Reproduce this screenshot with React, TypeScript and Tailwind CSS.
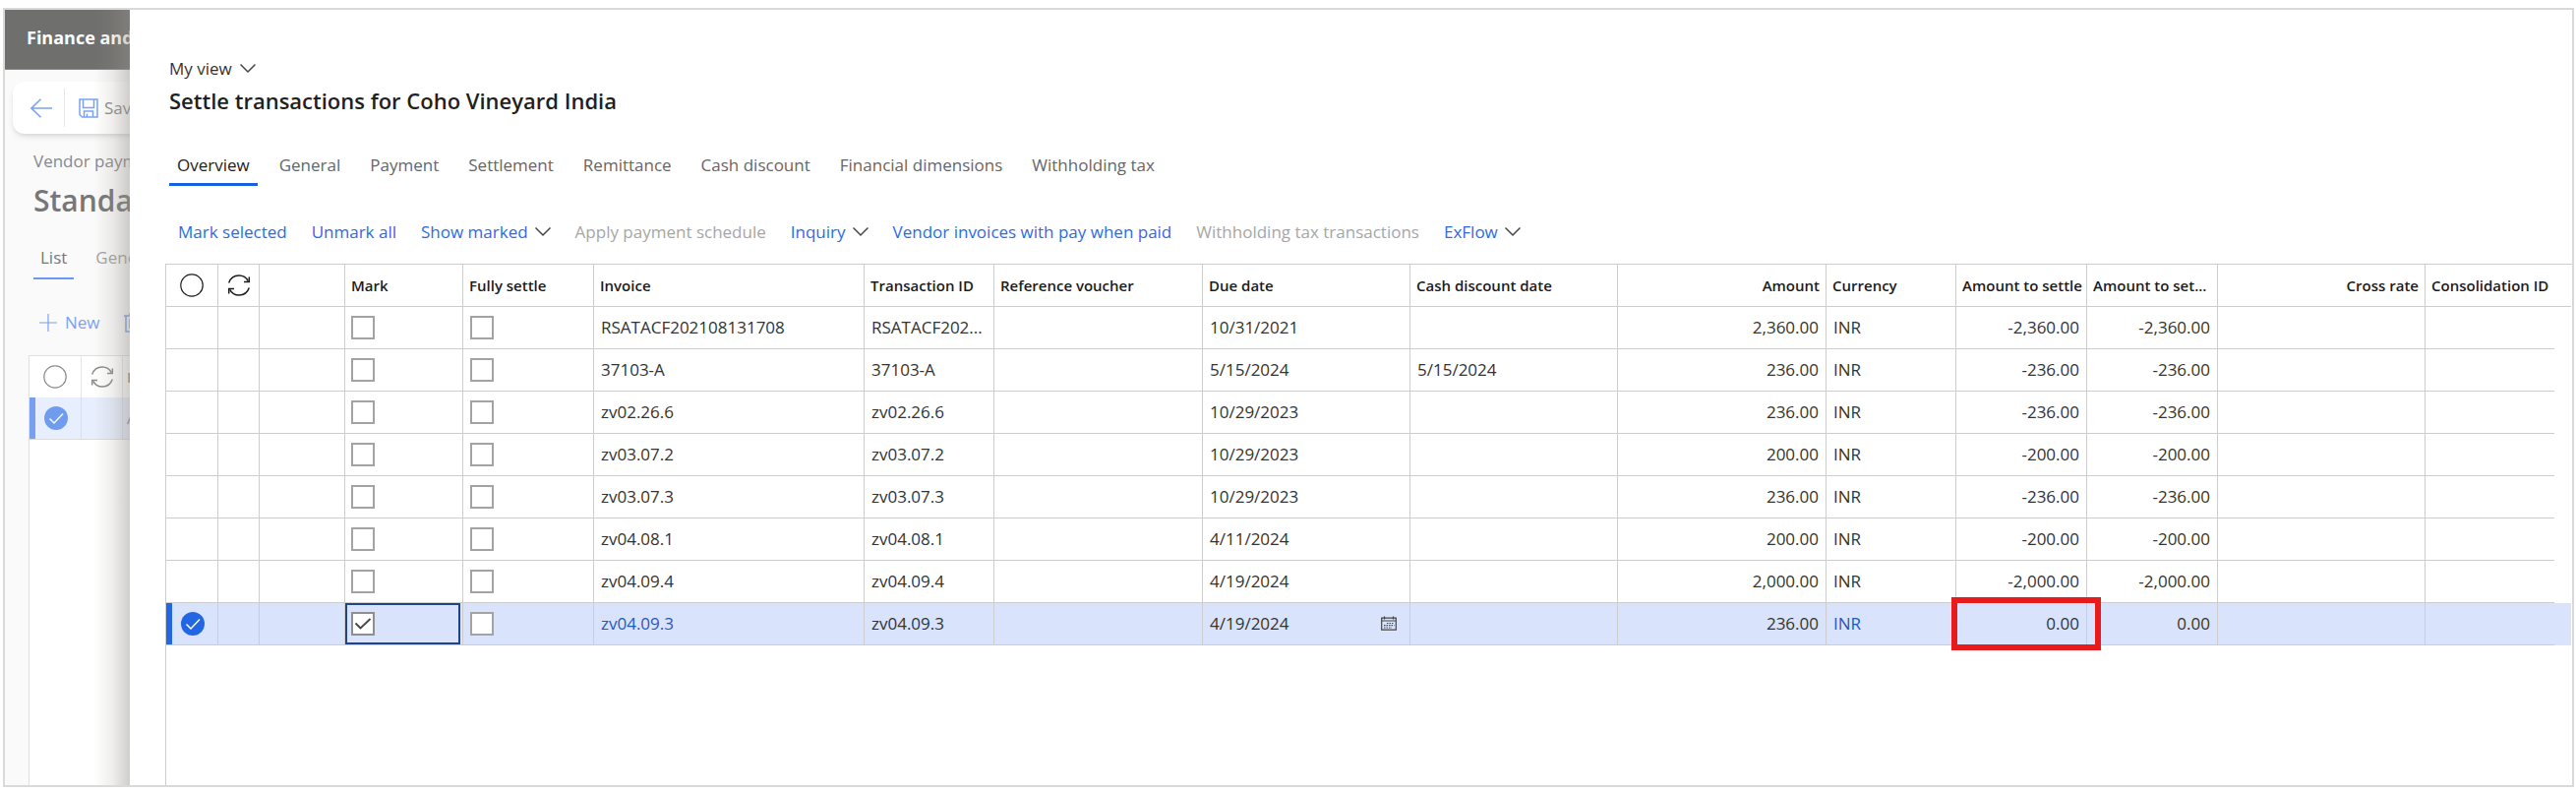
import React from 'react';

const tabs = [
    'Overview',
    'General',
    'Payment',
    'Settlement',
    'Remittance',
    'Cash discount',
    'Financial dimensions',
    'Withholding tax',
];

const actions = [
    { name: 'Mark selected' },
    { name: 'Unmark all' },
    { name: 'Show marked', menu: true },
    { name: 'Apply payment schedule', disabled: true },
    { name: 'Inquiry', menu: true },
    { name: 'Vendor invoices with pay when paid' },
    { name: 'Withholding tax transactions', disabled: true },
    { name: 'ExFlow', menu: true },
];

type Transaction = {
    invoice: string;
    id: string;
    due: string;
    discount?: string;
    amount: string;
    settle: string;
    selected?: boolean;
};

const transactions: Transaction[] = [
    { invoice: 'RSATACF202108131708', id: 'RSATACF202...', due: '10/31/2021', amount: '2,360.00', settle: '-2,360.00' },
    { invoice: '37103-A', id: '37103-A', due: '5/15/2024', discount: '5/15/2024', amount: '236.00', settle: '-236.00' },
    { invoice: 'zv02.26.6', id: 'zv02.26.6', due: '10/29/2023', amount: '236.00', settle: '-236.00' },
    { invoice: 'zv03.07.2', id: 'zv03.07.2', due: '10/29/2023', amount: '200.00', settle: '-200.00' },
    { invoice: 'zv03.07.3', id: 'zv03.07.3', due: '10/29/2023', amount: '236.00', settle: '-236.00' },
    { invoice: 'zv04.08.1', id: 'zv04.08.1', due: '4/11/2024', amount: '200.00', settle: '-200.00' },
    { invoice: 'zv04.09.4', id: 'zv04.09.4', due: '4/19/2024', amount: '2,000.00', settle: '-2,000.00' },
    { invoice: 'zv04.09.3', id: 'zv04.09.3', due: '4/19/2024', amount: '236.00', settle: '0.00', selected: true },
];

const ChevronIcon: React.FC = () => (
    <svg className="w-4 h-4 text-[#444]" viewBox="0 0 16 16" fill="none" stroke="currentColor" strokeWidth="1.5">
        <path d="M0.5 3.5 8 11l7.5-7.5" />
    </svg>
);

const RefreshIcon: React.FC = () => (
    <svg className="w-6 h-6 mx-auto" viewBox="0 0 24 24" fill="none" stroke="currentColor" strokeWidth="1.5">
        <path d="M1.7 9.5C3.2 5 7.2 2 12 2c4 0 7.5 2.2 9.3 5.7M22.3 14.5C20.8 19 16.8 22 12 22c-4 0-7.5-2.2-9.3-5.7" />
        <path d="M22.3 3.5v5h-5.3M1.7 20.5v-5H7" />
    </svg>
);

const CircleIcon: React.FC = () => (
    <svg className="w-6 h-6 mx-auto" viewBox="0 0 24 24" fill="none" stroke="currentColor" strokeWidth="1.2">
        <circle cx="12" cy="12" r="11.2" />
    </svg>
);

const CheckedCircleIcon: React.FC = () => (
    <svg className="w-6 h-6 mx-auto" viewBox="0 0 24 24" fill="none">
        <circle cx="12" cy="12" r="12" fill="#2266e3" />
        <path d="M5.5 12.5l4.5 4.5 9-9.5" stroke="#fff" strokeWidth="1.5" />
    </svg>
);

const CalendarIcon: React.FC = () => (
    <svg className="w-4 h-4" viewBox="0 0 16 16" fill="none" stroke="#444" strokeWidth="1.2">
        <path d="M0.7 2.2h14.6v12H0.7zM0.7 5h14.6M3.5 0.5v3M12.5 0.5v3" />
        <path d="M6 7.5h7.5M3 9.7h10.5M3 12h8" strokeDasharray="1.5 1" />
    </svg>
);

const BackgroundPage: React.FC = () => (
    <aside className="relative w-[127px] shrink-0 overflow-hidden flex flex-col whitespace-nowrap bg-[#fafafa]">
        <header className="h-[61px] shrink-0 flex items-center pl-[22px] pb-1 bg-[#6f6f6d] border-b border-[#8a8a88] text-white text-lg font-bold">
            Finance and Operations
        </header>
        <div className="mt-3 ml-2 h-[53px] w-60 shrink-0 flex items-center rounded-xl bg-white shadow-md text-[#8a8a8a]">
            <button aria-label="Back" className="w-[53px] h-[39px] flex items-center justify-end pr-3 border-r border-[#e6e6e6]">
                <svg className="w-[22px] h-5" viewBox="0 0 22 20" fill="none" stroke="#7ba2f0" strokeWidth="1.6">
                    <path d="M22 10H1M10.5 0.8 1 10l9.5 9.2" />
                </svg>
            </button>
            <button className="flex items-center gap-[6px] pl-[14px] text-[17px]">
                <svg className="w-5 h-5" viewBox="0 0 20 20" fill="none" stroke="#7ba2f0" strokeWidth="1.5">
                    <path d="M1 1h18v18H3.5L1 16.5zM4.5 1v8.5h11V1M5.5 19v-6h9v6M8.5 19v-3.5" />
                </svg>
                Save
            </button>
        </div>
        <div className="mt-4 pl-[29px] flex flex-col">
            <span className="text-[17px] leading-6 text-[#8a8886]">Vendor payments</span>
            <span className="mt-2 text-3xl font-semibold leading-10 text-[#777]">Standard view</span>
            <div className="mt-[26px] flex gap-[22px] text-[17px] leading-6">
                <a href="#" className="px-[7px] pb-2 border-b-2 border-[#6b98f3] text-[#777]">List</a>
                <a href="#" className="text-[#a3a3a3]">General</a>
            </div>
            <div className="mt-7 pl-[6px] flex gap-6 text-[17px] leading-8 text-[#7ba2f0]">
                <button className="flex items-center gap-2">
                    <svg className="w-[18px] h-[18px]" viewBox="0 0 18 18" stroke="currentColor" strokeWidth="1.2">
                        <path d="M9 0v18M0 9h18" />
                    </svg>
                    New
                </button>
                <button aria-label="Delete">
                    <svg className="w-[18px] h-5" viewBox="0 0 18 20" fill="none" stroke="currentColor" strokeWidth="1.5">
                        <path d="M0 3h18M2 3v16h14V3M6 3V1h6v2M6 6v10M9 6v10M12 6v10" />
                    </svg>
                </button>
            </div>
        </div>
        <div className="mt-[17px] ml-6 flex-1 bg-white border-l border-t border-[#e0e0e0] text-[#8a8a8a]">
            <div className="h-[42px] w-60 flex items-center">
                <span className="w-[53px] h-full flex items-center border-r border-[#e6e6e6]"><CircleIcon /></span>
                <span className="w-[42px] h-full flex items-center border-r border-[#e6e6e6]"><RefreshIcon /></span>
                <span className="pl-1 text-[15px] font-semibold">Name</span>
            </div>
            <div className="h-[43px] w-60 flex items-center bg-[#e7eefd] border-b border-[#dcdcdc]">
                <span className="w-[53px] h-full flex items-center pr-[5px] border-l-6 border-r border-r-[#d8deea] border-l-[#78a0ee]">
                    <span className="mx-auto opacity-60"><CheckedCircleIcon /></span>
                </span>
                <span className="w-[42px] h-full border-r border-[#d8deea]" />
                <span className="pl-1 text-[17px]">APPay</span>
            </div>
        </div>
        {/* shade cast by the slide-over panel */}
        <div className="absolute inset-y-0 right-0 w-9 bg-linear-to-r from-transparent via-[#96918a]/15 to-[#96918a]/45" />
    </aside>
);

type HeadProps = {
    children?: React.ReactNode;
    right?: boolean;
};

const Head: React.FC<HeadProps> = ({ children, right }) => (
    <th className={`h-[43px] px-[6px] border-l border-b border-[#cdcdcd] font-semibold whitespace-nowrap ${right ? 'text-right' : 'text-left'}`}>
        {children}
    </th>
);

const Cell: React.FC<HeadProps & { className?: string }> = ({ children, right, className = '' }) => (
    <td className={`h-[43px] px-[7px] border-l border-b border-[#cdcdcd] whitespace-nowrap ${right ? 'text-right' : 'text-left'} ${className}`}>
        {children}
    </td>
);

const CheckBox: React.FC<{ label: string; checked?: boolean }> = ({ label, checked }) => (
    <span className="relative block w-6 h-6">
        <input
            type="checkbox"
            aria-label={label}
            defaultChecked={checked}
            className="peer block w-6 h-6 appearance-none bg-white border-2 border-[#a3a3a3] checked:border-[#8f8f8f]"
        />
        <svg
            className="hidden peer-checked:block absolute inset-0 w-6 h-6 pointer-events-none"
            viewBox="0 0 24 24"
            fill="none"
            stroke="#444"
            strokeWidth="1.8"
        >
            <path d="M4.5 11.5l5 5 10-9.5" />
        </svg>
    </span>
);

const TransactionRow: React.FC<{ row: Transaction }> = ({ row }) => (
    <tr className={row.selected ? 'bg-[#d9e4fc]' : ''}>
        <td className="h-[43px] border-l border-b border-[#cdcdcd]">
            {row.selected && (
                <div className="h-[42px] flex items-center border-l-6 pr-[5px] border-[#2266e3]">
                    <CheckedCircleIcon />
                </div>
            )}
        </td>
        <Cell />
        <Cell />
        <td className="h-[43px] border-l border-b border-[#cdcdcd]">
            <div className={`h-[42px] mr-[2px] flex items-center ${row.selected ? 'border-2 border-[#1f448c] pl-1' : 'pl-[6px]'}`}>
                <CheckBox label={`Mark ${row.invoice}`} checked={row.selected} />
            </div>
        </td>
        <Cell>
            <CheckBox label={`Fully settle ${row.invoice}`} />
        </Cell>
        <Cell>
            {row.selected ? <a href="#" className="text-[#2459bd]">{row.invoice}</a> : row.invoice}
        </Cell>
        <Cell>{row.id}</Cell>
        <Cell />
        <Cell>
            <div className="flex items-center justify-between pr-[6px]">
                {row.due}
                {row.selected && <button aria-label="Pick due date"><CalendarIcon /></button>}
            </div>
        </Cell>
        <Cell>{row.discount}</Cell>
        <Cell right>{row.amount}</Cell>
        <Cell>
            {row.selected ? <a href="#" className="text-[#2459bd]">INR</a> : 'INR'}
        </Cell>
        <Cell right className="relative">
            {row.settle}
            {row.selected && <span className="absolute -left-[5px] -right-[15px] -top-[6px] -bottom-[6px] z-10 border-6 border-[#e81a1c]" />}
        </Cell>
        <Cell right>{row.settle}</Cell>
        <Cell />
        <Cell />
        <td />
    </tr>
);

const SettlePanel: React.FC = () => (
    <main className="flex-1 min-w-0 flex flex-col pl-9 bg-white">
        <button className="mt-11 ml-1 self-start flex items-center gap-2 text-[17px] leading-8 text-[#333]">
            My view
            <ChevronIcon />
        </button>
        <h1 className="ml-1 text-[22px] leading-8 font-semibold text-[#1f1f1f]">
            Settle transactions for Coho Vineyard India
        </h1>
        <nav className="mt-[38px] ml-1 flex gap-[14px] text-[17px] leading-6">
            {tabs.map((tab, i) => (
                <a
                    key={tab}
                    href="#"
                    className={`px-2 pb-[6px] border-b-3 ${i === 0 ? 'border-[#1a5fe0] text-[#222]' : 'border-transparent text-[#666]'}`}
                >
                    {tab}
                </a>
            ))}
        </nav>
        <div className="mt-[31px] ml-[13px] flex gap-[25px] text-[17px] leading-8">
            {actions.map((action) => (
                <button
                    key={action.name}
                    disabled={action.disabled}
                    className="flex items-center gap-[7px] text-[#2c6be6] disabled:text-[#a6a6a6]"
                >
                    {action.name}
                    {action.menu && <ChevronIcon />}
                </button>
            ))}
        </div>
        <div className="mt-4 flex-1 border-l border-t border-[#cdcdcd]">
            <table className="w-full table-fixed border-separate border-spacing-0 -ml-px text-[17px] text-[#333]">
                <colgroup>
                    <col className="w-[53px]" />
                    <col className="w-[42px]" />
                    <col className="w-[87px]" />
                    <col className="w-[120px]" />
                    <col className="w-[133px]" />
                    <col className="w-[275px]" />
                    <col className="w-[132px]" />
                    <col className="w-[212px]" />
                    <col className="w-[211px]" />
                    <col className="w-[211px]" />
                    <col className="w-[212px]" />
                    <col className="w-[132px]" />
                    <col className="w-[133px]" />
                    <col className="w-[133px]" />
                    <col className="w-[211px]" />
                    <col />
                    <col className="w-[17px]" />
                </colgroup>
                <thead className="text-[15px] text-[#1c1c1c]">
                    <tr>
                        <Head><CircleIcon /></Head>
                        <Head><RefreshIcon /></Head>
                        <Head />
                        <Head>Mark</Head>
                        <Head>Fully settle</Head>
                        <Head>Invoice</Head>
                        <Head>Transaction ID</Head>
                        <Head>Reference voucher</Head>
                        <Head>Due date</Head>
                        <Head>Cash discount date</Head>
                        <Head right>Amount</Head>
                        <Head>Currency</Head>
                        <Head right>Amount to settle</Head>
                        <Head>Amount to set...</Head>
                        <Head right>Cross rate</Head>
                        <Head>Consolidation ID</Head>
                        <th className="border-b border-[#cdcdcd]" />
                    </tr>
                </thead>
                <tbody>
                    {transactions.map((row) => (
                        <TransactionRow key={row.invoice} row={row} />
                    ))}
                </tbody>
            </table>
        </div>
    </main>
);

const App: React.FC = () => (
    <div className="min-h-screen flex bg-white pt-2 pb-[5px] pl-[3px] pr-[2px] font-['Open_Sans','Noto_Sans',sans-serif]">
        <div className="flex-1 min-w-0 flex overflow-hidden border-2 border-[#d9d9d9]">
            <BackgroundPage />
            <SettlePanel />
        </div>
    </div>
);

export default App;
